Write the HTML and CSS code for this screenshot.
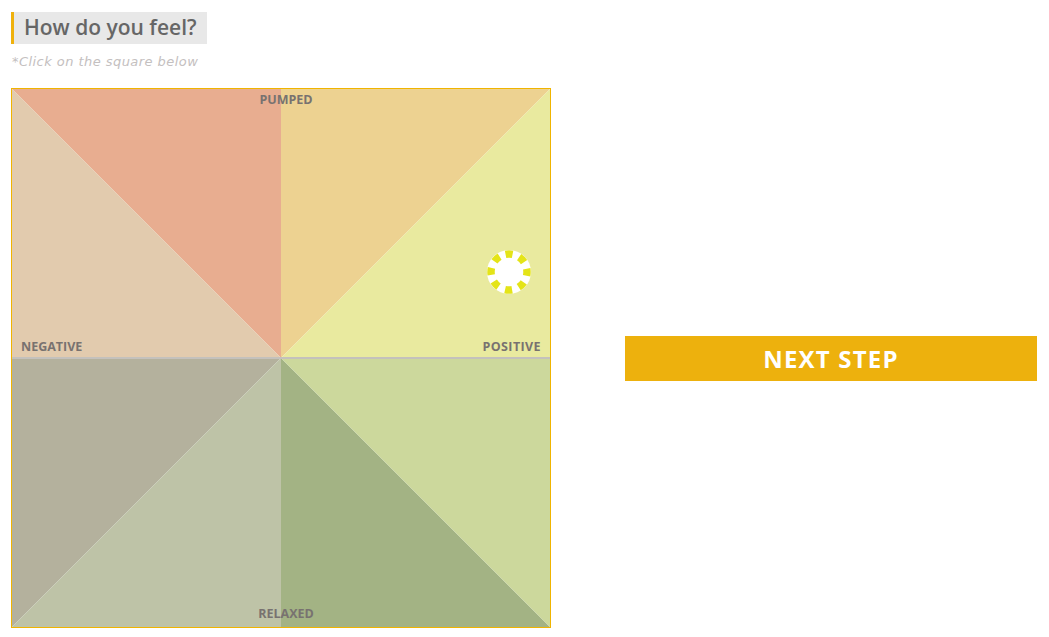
FILE: index.html
```html
<!DOCTYPE html>
<html>
<head>
<meta charset="utf-8">
<link rel="stylesheet" href="styles.css">
</head>
<body>
<div class="page">
  <h1 class="title">How do you feel?</h1>
  <p class="hint">*Click on the square below</p>
  <div class="row">
    <div class="square">
      <svg class="chart" width="538" height="538" viewBox="0 0 538 538">
        <polygon points="0,0 269,0 269,269" fill="#e8ad90"/>
        <polygon points="269,0 538,0 269,269" fill="#edd291"/>
        <polygon points="0,0 269,269 0,269" fill="#e2cbae"/>
        <polygon points="538,0 538,269 269,269" fill="#e9ea9f"/>
        <polygon points="0,269 269,269 0,538" fill="#b4b19d"/>
        <polygon points="0,538 269,269 269,538" fill="#bec3a7"/>
        <polygon points="269,269 538,538 269,538" fill="#a3b384"/>
        <polygon points="269,269 538,269 538,538" fill="#ccd89c"/>
        <line x1="0" y1="269" x2="538" y2="269" stroke="#c4c1bc" stroke-width="2"/>
      </svg>
      <span class="label label-top">PUMPED</span>
      <span class="label label-left">NEGATIVE</span>
      <span class="label label-right">POSITIVE</span>
      <span class="label label-bottom">RELAXED</span>
      <svg class="marker" width="46" height="46" viewBox="0 0 46 46">
        <circle cx="23" cy="23" r="22" fill="#fff"/>
        <circle cx="23" cy="23" r="18" fill="none" stroke="#e4e418" stroke-width="7.5" stroke-dasharray="7 7.14" transform="rotate(-101 23 23)"/>
      </svg>
    </div>
    <div class="side">
      <button class="next">NEXT STEP</button>
    </div>
  </div>
</div>
</body>
</html>
```
FILE: styles.css
```css
* { box-sizing: border-box; }
body {
  margin: 0;
  background: #fff;
  font-family: "Open Sans", "Liberation Sans", sans-serif;
}
.page {
  padding: 12px 12px 0 11px;
}
.title {
  display: inline-block;
  margin: 0;
  height: 32px;
  line-height: 31px;
  padding: 0 10px 0 10px;
  border-left: 3px solid #efb10c;
  background: #e8e8e8;
  color: #666;
  font-size: 21px;
  font-weight: 600;
}
.hint {
  margin: 8px 0 0 1px;
  height: 36px;
  line-height: 20px;
  font-family: "DejaVu Sans", "Open Sans", sans-serif;
  font-size: 13px;
  letter-spacing: 0.45px;
  font-style: italic;
  color: #c4c0c0;
}
.row {
  display: flex;
  align-items: center;
}
.square {
  position: relative;
  width: 540px;
  height: 540px;
  border: 1px solid #f0b400;
  flex: none;
}
.chart { display: block; }
.label {
  position: absolute;
  font-size: 12.5px;
  font-weight: 700;
  color: #787270;
  line-height: 14px;
}
.label-top { top: 4px; left: 0; right: 0; text-align: center; padding-left: 10px; }
.label-bottom { bottom: 6px; left: 0; right: 0; text-align: center; padding-left: 10px; }
.label-left { left: 9px; top: 251px; }
.label-right { right: 9px; top: 251px; letter-spacing: 0.4px; }
.marker {
  position: absolute;
  left: 474px;
  top: 160px;
}
.side {
  flex: 1;
  padding-left: 74px;
}
.next {
  display: block;
  width: 100%;
  height: 45px;
  border: none;
  background: #edb10d;
  color: #fff;
  font-family: "Open Sans", "Liberation Sans", sans-serif;
  font-size: 24px;
  font-weight: 700;
  letter-spacing: 1.2px;
  margin-top: 0;
}
```
